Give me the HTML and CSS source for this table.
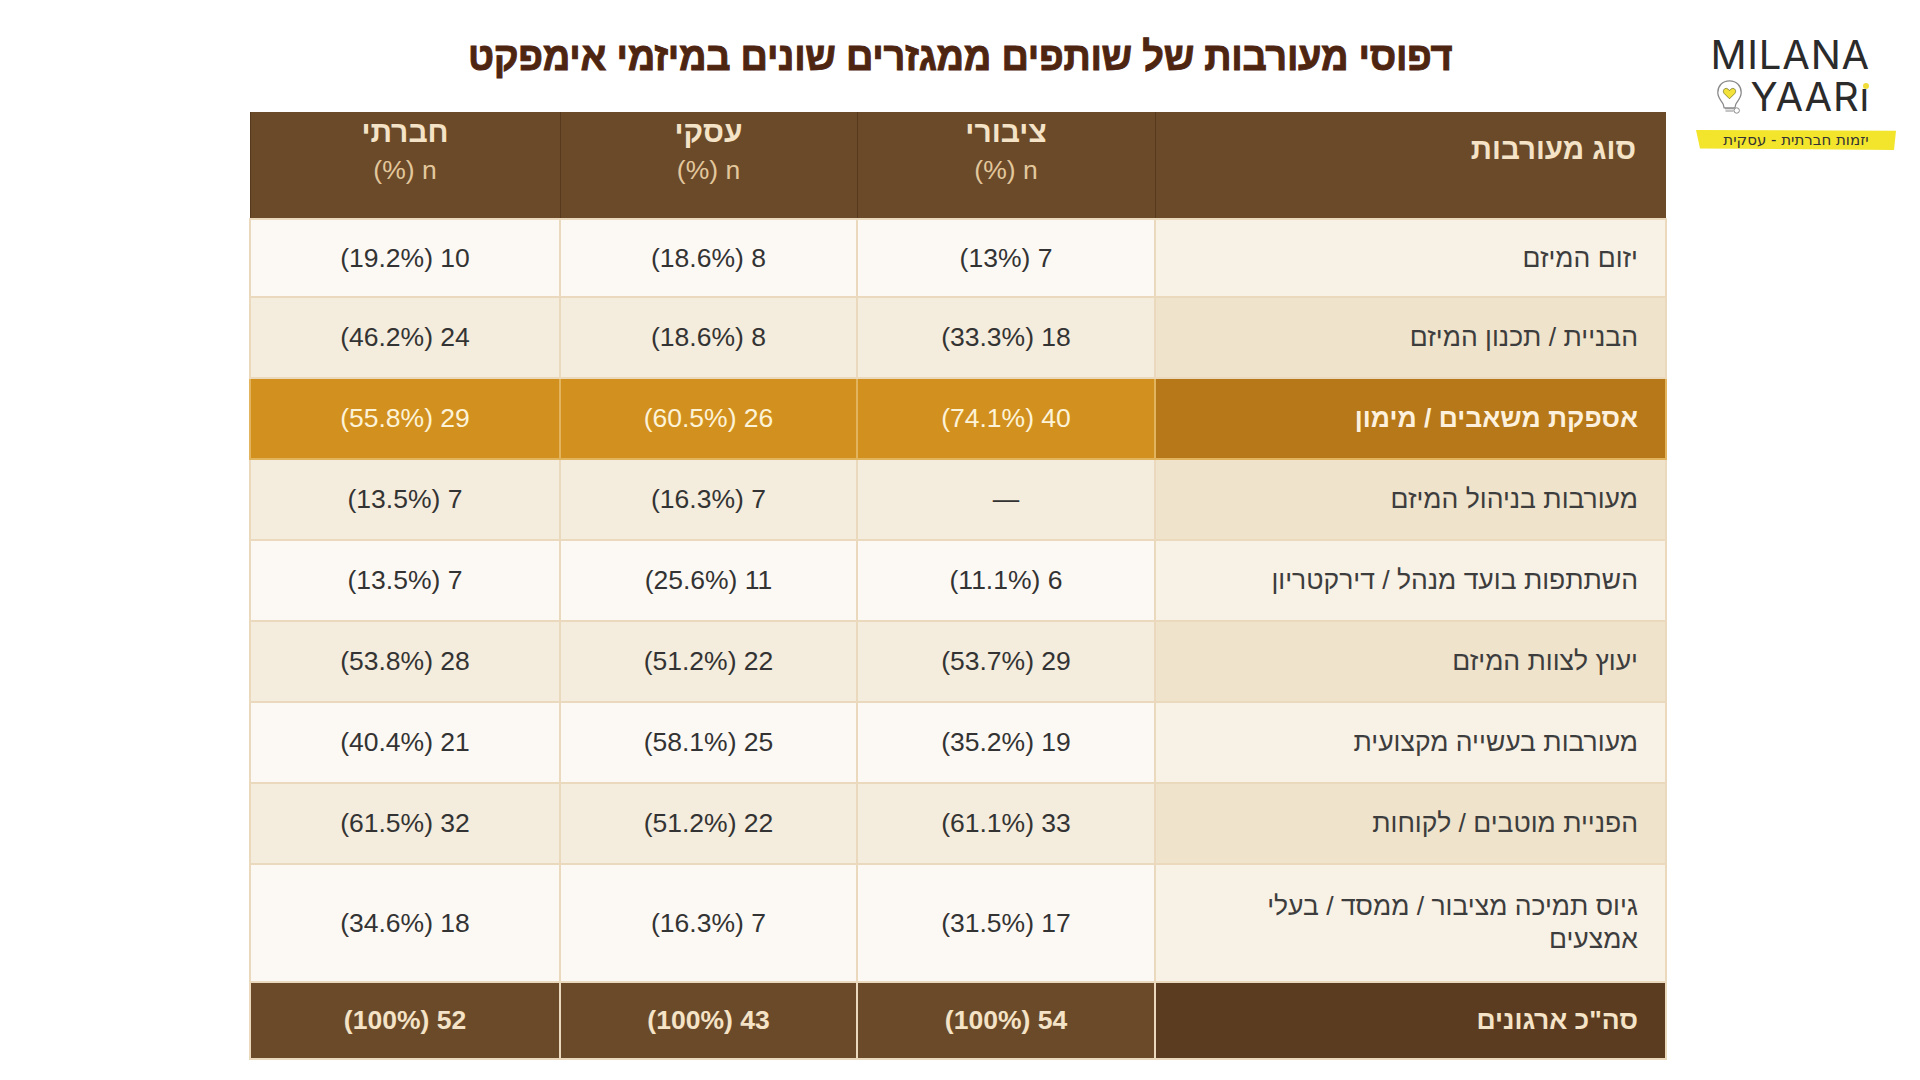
FILE: index.html
```html
<!DOCTYPE html>
<html lang="he" dir="rtl">
<head>
<meta charset="utf-8">
<title>דפוסי מעורבות</title>
<link rel="stylesheet" href="styles.css">
</head>
<body>
<div class="page">
  <h1 class="title">דפוסי מעורבות של שותפים ממגזרים שונים במיזמי אימפקט</h1>

  <div class="logo">
    <div class="logo-line">MILANA</div>
    <div class="logo-line logo-second">
      <svg class="bulb" viewBox="0 0 30 40" width="27" height="36">
        <path d="M15 2 C7 2 2 8 2 15 C2 21 6 24 8 28 L9 32 L21 32 L22 28 C24 24 28 21 28 15 C28 8 23 2 15 2 Z" fill="none" stroke="#8a8a8a" stroke-width="1.4"/>
        <path d="M15 22 L9 16 C7 13 9 10 12 10.5 C13.5 11 14.5 12 15 13 C15.5 12 16.5 11 18 10.5 C21 10 23 13 21 16 Z" fill="#f2e23a" stroke="#6b6b20" stroke-width="0.8"/>
        <path d="M10 33 L20 33 M10.5 35.5 L19.5 35.5" stroke="#8a8a8a" stroke-width="1.2"/>
        <circle cx="23" cy="35" r="3" fill="none" stroke="#8a8a8a" stroke-width="1.1"/>
      </svg>
      <span class="yaari">YAARı</span>
    </div>
    <div class="logo-tag">יזמות חברתית - עסקית</div>
  </div>

  <div class="table-wrap">
    <table class="data">
      <colgroup>
        <col class="c-label">
        <col class="c-pub">
        <col class="c-biz">
        <col class="c-soc">
      </colgroup>
      <thead>
        <tr>
          <th class="lbl">סוג מעורבות</th>
          <th><div>ציבורי</div><div class="sub" dir="ltr">(%) n</div></th>
          <th><div>עסקי</div><div class="sub" dir="ltr">(%) n</div></th>
          <th><div>חברתי</div><div class="sub" dir="ltr">(%) n</div></th>
        </tr>
      </thead>
      <tbody>
        <tr class="odd first">
          <td class="lbl">יזום המיזם</td>
          <td dir="ltr">(13%) 7</td>
          <td dir="ltr">(18.6%) 8</td>
          <td dir="ltr">(19.2%) 10</td>
        </tr>
        <tr class="even">
          <td class="lbl">הבניית / תכנון המיזם</td>
          <td dir="ltr">(33.3%) 18</td>
          <td dir="ltr">(18.6%) 8</td>
          <td dir="ltr">(46.2%) 24</td>
        </tr>
        <tr class="hi">
          <td class="lbl">אספקת משאבים / מימון</td>
          <td dir="ltr">(74.1%) 40</td>
          <td dir="ltr">(60.5%) 26</td>
          <td dir="ltr">(55.8%) 29</td>
        </tr>
        <tr class="even">
          <td class="lbl">מעורבות בניהול המיזם</td>
          <td>—</td>
          <td dir="ltr">(16.3%) 7</td>
          <td dir="ltr">(13.5%) 7</td>
        </tr>
        <tr class="odd">
          <td class="lbl">השתתפות בועד מנהל / דירקטריון</td>
          <td dir="ltr">(11.1%) 6</td>
          <td dir="ltr">(25.6%) 11</td>
          <td dir="ltr">(13.5%) 7</td>
        </tr>
        <tr class="even">
          <td class="lbl">יעוץ לצוות המיזם</td>
          <td dir="ltr">(53.7%) 29</td>
          <td dir="ltr">(51.2%) 22</td>
          <td dir="ltr">(53.8%) 28</td>
        </tr>
        <tr class="odd">
          <td class="lbl">מעורבות בעשייה מקצועית</td>
          <td dir="ltr">(35.2%) 19</td>
          <td dir="ltr">(58.1%) 25</td>
          <td dir="ltr">(40.4%) 21</td>
        </tr>
        <tr class="even">
          <td class="lbl">הפניית מוטבים / לקוחות</td>
          <td dir="ltr">(61.1%) 33</td>
          <td dir="ltr">(51.2%) 22</td>
          <td dir="ltr">(61.5%) 32</td>
        </tr>
        <tr class="odd tall">
          <td class="lbl">גיוס תמיכה מציבור / ממסד / בעלי<br>אמצעים</td>
          <td dir="ltr">(31.5%) 17</td>
          <td dir="ltr">(16.3%) 7</td>
          <td dir="ltr">(34.6%) 18</td>
        </tr>
      </tbody>
      <tfoot>
        <tr>
          <td class="lbl">סה"כ ארגונים</td>
          <td dir="ltr">(100%) 54</td>
          <td dir="ltr">(100%) 43</td>
          <td dir="ltr">(100%) 52</td>
        </tr>
      </tfoot>
    </table>
  </div>
</div>
</body>
</html>
```

FILE: styles.css
```css
html, body {
  margin: 0;
  padding: 0;
  background: #ffffff;
}

body {
  font-family: "Liberation Sans", "DejaVu Sans", Arial, sans-serif;
  color: #3b3b3b;
}

.page {
  position: relative;
  width: 1920px;
  height: 1080px;
  display: flex;
  flex-direction: column;
  align-items: center;
  overflow: hidden;
}

.title {
  margin: 30px 0 0 0;
  height: 52px;
  line-height: 52px;
  font-size: 40px;
  font-weight: 700;
  color: #4e2510;
  letter-spacing: -0.3px;
  transform: scaleX(0.95);
  -webkit-text-stroke: 0.9px #4e2510;
}

.table-wrap {
  margin-top: 30px;
  padding-right: 4px;
}

.data {
  width: 1416px;
  border-collapse: collapse;
  table-layout: fixed;
  font-size: 26.5px;
}

.c-label { width: 511px; }
.c-pub { width: 298px; }
.c-biz { width: 297px; }
.c-soc { width: 310px; }

.data thead th {
  background: #6b4a2a;
  color: #f4e3c6;
  font-weight: 700;
  font-size: 30px;
  height: 107px;
  vertical-align: top;
  padding: 1px 10px 0 10px;
  box-sizing: border-box;
  text-align: center;
  border-left: 1px solid #57391e;
  line-height: 38px;
}

.data thead th.lbl {
  text-align: right;
  padding: 18px 30px 0 10px;
  font-size: 29.5px;
}

.data thead th .sub {
  font-weight: 400;
  font-size: 26.5px;
  color: #e2c79c;
}

.data td {
  height: 81px;
  box-sizing: border-box;
  text-align: center;
  vertical-align: middle;
  border: 2px solid #ead9bd;
  padding: 0 10px;
  line-height: 33px;
  color: #333333;
}

.data tr.first td { height: 78px; }

.data td.lbl {
  text-align: right;
  padding-right: 27px;
  color: #3d3d3d;
}

.data tr.odd td { background: #fcf9f4; }
.data tr.odd td.lbl { background: #f8f1e6; }
.data tr.even td { background: #f4ecdc; }
.data tr.even td.lbl { background: #efe3cc; }

.data tr.hi td {
  background: #d2911f;
  color: #fdf3d8;
  border-color: #e3b45e;
}
.data tr.hi td.lbl {
  background: #b67818;
  font-weight: 700;
  color: #fdf1de;
}

.data tr.tall td { height: 118px; }

.data tfoot td {
  height: 77px;
  background: #6b4a2a;
  color: #f4e3c6;
  font-weight: 700;
  border: 2px solid #ead9bd;
}
.data tfoot td.lbl {
  background: #5b3c21;
  color: #f4e3c6;
}

/* logo overlays the top-right corner */
.logo {
  position: absolute;
  top: 34px;
  right: 24px;
  width: 200px;
  display: flex;
  flex-direction: column;
  align-items: flex-end;
  direction: ltr;
}

.logo-line {
  font-family: "Inter", "Lato", sans-serif;
  font-weight: 400;
  font-size: 40px;
  line-height: 42px;
  color: #2b2b2b;
  letter-spacing: 0.8px;
  padding-right: 26px;
}

.logo-second {
  display: flex;
  align-items: center;
  gap: 8px;
}

.bulb {
  display: block;
}

.yaari {
  position: relative;
}

.yaari::after {
  content: "";
  position: absolute;
  right: 1px;
  top: 7px;
  width: 6px;
  height: 6px;
  border-radius: 50%;
  background: #f0dd3a;
}

.logo-tag {
  margin-top: 12px;
  width: 200px;
  height: 20px;
  background: #f2e52c;
  clip-path: polygon(0 0, 100% 4%, 99% 100%, 2% 92%);
  direction: rtl;
  text-align: center;
  font-family: "DejaVu Sans", "Liberation Sans", sans-serif;
  font-size: 15px;
  line-height: 20px;
  color: #333;
}
```
